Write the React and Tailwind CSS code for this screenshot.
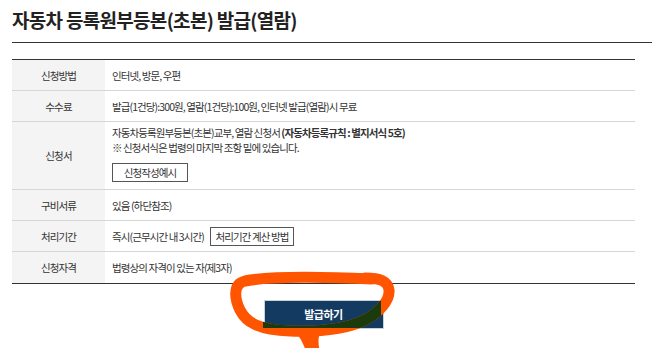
const rows = [
  { label: "신청방법", h: "h-[31px]" },
  { label: "수수료", h: "h-[31px]" },
  { label: "신청서", h: "h-[68px]" },
  { label: "구비서류", h: "h-[31px]" },
  { label: "처리기간", h: "h-[31px]" },
  { label: "신청자격", h: "h-[32px]" },
];

const loop =
  "M372 279 C330 277 270 276 245 281 C232 284 235 300 240 310 C246 322 258 330 290 331 C320 332 345 330 365 320 C380 312 390 300 389 290 C388 281 380 278 365 278";

const Row = ({ label, h, last, children }) => (
  <div
    className={`flex ${h} border-b ${last ? "border-[#333]" : "border-[#d6d6d6]"}`}
  >
    <div className="w-[93px] shrink-0 bg-[#f4f4f4] flex items-center justify-center text-[#333]">
      {label}
    </div>
    <div className="flex-1 pl-[7px] flex items-center text-[#333]">{children}</div>
  </div>
);

export default function App() {
  return (
    <div className="relative w-[652px] h-[348px] overflow-hidden bg-white font-['Noto_Sans_CJK_KR',sans-serif]">
      <div className="ml-3 pt-[7px] pb-[9px] border-b border-[#333]">
        <h1 className="text-[19px] leading-[26px] font-bold tracking-[-0.7px] text-[#222]">
          자동차 등록원부등본(초본) 발급(열람)
        </h1>
      </div>

      <div className="ml-3 mt-4 w-[623px] border-t border-[#333] text-[10.5px] tracking-[-0.9px] leading-[15px]">
        <Row {...rows[0]}>인터넷, 방문, 우편</Row>
        <Row {...rows[1]}>발급(1건당):300원, 열람(1건당):100원, 인터넷 발급(열람)시 무료</Row>
        <div className="flex h-[68px] border-b border-[#d6d6d6]">
          <div className="w-[93px] shrink-0 bg-[#f4f4f4] flex items-center justify-center text-[#333]">
            신청서
          </div>
          <div className="flex-1 pl-[7px] pt-[3px] text-[#333]">
            <p>
              자동차등록원부등본(초본)교부, 열람 신청서{" "}
              <span className="font-bold">(자동차등록규칙 : 별지서식 5호)</span>
            </p>
            <p>※ 신청서식은 법령의 마지막 조항 밑에 있습니다.</p>
            <div className="mt-2 w-[76px] h-[19px] border border-[#555] flex items-center justify-center">
              신청작성예시
            </div>
          </div>
        </div>
        <Row {...rows[3]}>있음 (하단참조)</Row>
        <Row {...rows[4]}>
          <span>즉시(근무시간 내 3시간)</span>
          <span className="ml-[6px] w-[84px] h-[19px] border border-[#555] flex items-center justify-center">
            처리기간 계산 방법
          </span>
        </Row>
        <Row {...rows[5]} last>
          법령상의 자격이 있는 자(제3자)
        </Row>
      </div>

      <div className="flex justify-center w-[623px] ml-3 mt-[16px]">
        <button className="w-[120px] h-[29px] bg-[#133b62] border border-[#c9d1d9] text-white text-[11px] font-bold tracking-[-0.5px]">
          발급하기
        </button>
      </div>

      <svg
        className="absolute inset-0 pointer-events-none"
        width="652"
        height="348"
        viewBox="0 0 652 348"
      >
        <defs>
          <clipPath id="btn">
            <rect x="263" y="301" width="118" height="27" />
          </clipPath>
        </defs>
        <path d={loop} fill="none" stroke="#ff5500" strokeWidth="11" strokeLinecap="round" strokeLinejoin="round" />
        <path d="M296 332 C300 338 304 344 306 352 L320 352 C318 344 318 338 320 333 Z" fill="#ff5500" />
        <path
          d={loop}
          fill="none"
          stroke="#1c3b0c"
          strokeWidth="11"
          strokeLinecap="round"
          clipPath="url(#btn)"
        />
      </svg>
    </div>
  );
}
